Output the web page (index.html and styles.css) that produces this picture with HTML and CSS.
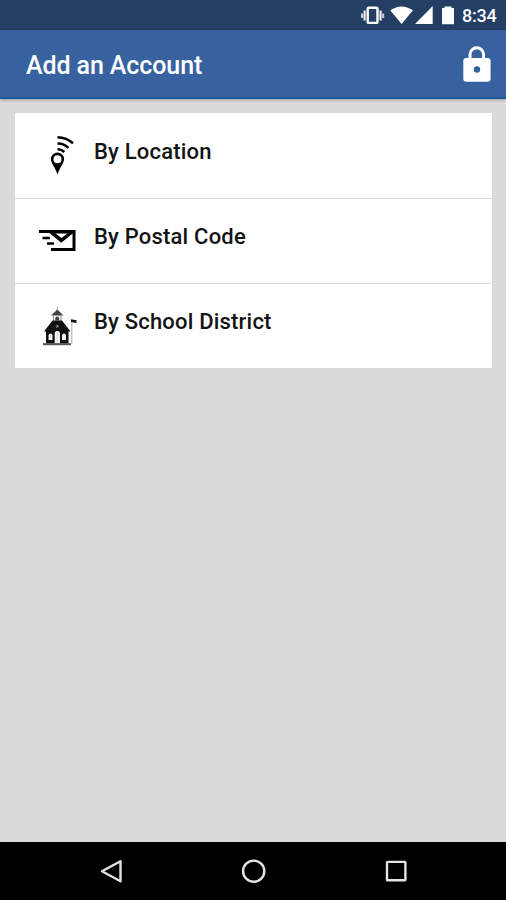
FILE: index.html
```html
<!DOCTYPE html>
<html lang="en">
<head>
  <meta charset="UTF-8">
  <meta name="viewport" content="width=device-width, initial-scale=1.0">
  <title>Add an Account</title>
  <link rel="stylesheet" href="styles.css">
</head>
<body>
  <div class="status-bar">
    <svg class="status-icons" width="96" height="30" viewBox="0 0 96 30">
      <!-- vibrate -->
      <rect x="7.700" y="7.700" width="9.800" height="15.200" rx="1" fill="none" stroke="#fff" stroke-width="2.400"/>
      <path d="M4.600 10.500v10M20.600 10.500v10" stroke="#e8ecf2" stroke-width="2.200"/>
      <path d="M2 13.500v4.500M23.200 13.500v4.500" stroke="#c4cdd9" stroke-width="2"/>
      <!-- wifi -->
      <path d="M30.200 10.300Q41.500 2.500 53 10.300L41.600 24Z" fill="#fff"/>
      <!-- signal -->
      <path d="M72.700 6v18H55Z" fill="#fff"/>
      <!-- battery -->
      <path d="M84.500 6.500h7v1.500h2.500v16.300H82V8h2.500Z" fill="#fff"/>
    </svg>
    <span class="clock">8:34</span>
  </div>

  <header class="app-bar">
    <h1>Add an Account</h1>
    <svg class="lock" width="30" height="38" viewBox="0 0 30 38">
      <path d="M8 15V9.500a6.800 6.800 0 0 1 13.600 0V15" fill="none" stroke="#fff" stroke-width="3"/>
      <rect x="1.300" y="13" width="27.300" height="23.700" rx="3" fill="#fff"/>
      <circle cx="15" cy="24.500" r="3.200" fill="#37629f"/>
    </svg>
  </header>

  <main>
    <ul class="options">
      <li>
        <svg width="60" height="60" viewBox="0 0 60 60">
          <path fill-rule="evenodd" d="M27.500 27.500a6.600 6.600 0 0 1 6.600 6.500c0 4-4 8-6.600 15.500C25 42 20.900 38 20.900 34a6.600 6.600 0 0 1 6.600-6.500ZM27.500 30.200a4 4 0 1 0 0 8a4 4 0 1 0 0-8Z"/>
          <path d="M27.500 24.300Q31.500 24.300 34.300 27M27.500 18.500Q34 18.300 38.300 22.800M27.500 12.300Q36.500 12.500 43 18.300" fill="none" stroke="#000" stroke-width="2.500"/>
        </svg>
        <span>By Location</span>
      </li>
      <li>
        <svg width="60" height="60" viewBox="0 0 60 60">
          <path d="M9 21.500H44V39.600H21" fill="none" stroke="#000" stroke-width="3"/>
          <path d="M17 21 31.300 32.700 44.500 22V21Z"/>
          <path d="M25.500 23.500H37.500L31.500 28Z" fill="#fff"/>
          <path d="M12.500 28h7.500M17 33.500h7" stroke="#000" stroke-width="2.600"/>
        </svg>
        <span>By Postal Code</span>
      </li>
      <li>
        <svg width="60" height="60" viewBox="0 0 60 60">
          <path d="M27.300 11.500v4" stroke="#aaa" stroke-width="1"/>
          <path d="M27.300 14.500 33.500 20.500H21Z" fill="#444"/>
          <path d="M23.500 21v5M31 21v5" stroke="#888" stroke-width="1"/>
          <path d="M25.200 25.500v-2a2 2 0 0 1 4 0v2Z" fill="#444"/>
          <path d="M22.500 25.500H32L40.500 36.500H38.500V48.500H16V36.500H14Z" fill="#111"/>
          <circle cx="27.300" cy="31.300" r="1.500" fill="#777"/>
          <path d="M18.500 45v-4.500a2 2 0 0 1 4 0V45ZM32 45v-4.500a2 2 0 0 1 4 0V45Z" fill="#eee"/>
          <path d="M24.700 48.500V38.500a2.600 2.600 0 0 1 5.200 0V48.500Z" fill="#fff"/>
          <path d="M27.300 37v11.500" stroke="#aaa" stroke-width=".6"/>
          <path d="M13 49.200H41" stroke="#555" stroke-width="2"/>
          <path d="M41.800 25v24" stroke="#aaa" stroke-width="1"/>
          <path d="M41 24.300 46.500 25.300V28L41 27Z" fill="#111"/>
        </svg>
        <span>By School District</span>
      </li>
    </ul>
  </main>

  <nav class="nav-bar">
    <svg width="28" height="28" viewBox="0 0 28 28">
      <path d="M4 14.200 22.500 4.200V24.200Z"/>
    </svg>
    <svg width="28" height="28" viewBox="0 0 28 28">
      <circle cx="13.700" cy="14.200" r="10.600"/>
    </svg>
    <svg width="28" height="28" viewBox="0 0 28 28">
      <rect x="5" y="4.900" width="18.400" height="18.400" rx=".5"/>
    </svg>
  </nav>
</body>
</html>
```
FILE: styles.css
```css
* {
  box-sizing: border-box;
}

body {
  margin: 0;
  height: 100vh;
  display: flex;
  flex-direction: column;
  background: #dadada;
  font-family: Roboto, "Liberation Sans", sans-serif;
  overflow: hidden;
}

.status-bar {
  height: 30px;
  display: flex;
  justify-content: flex-end;
  align-items: center;
  padding-right: 9px;
  background: #243f63;
  color: #fff;
}

.status-icons {
  margin-right: 6px;
}

.clock {
  width: 35px;
  font-size: 18px;
  font-weight: 500;
  line-height: 30px;
  padding-top: 2px;
  letter-spacing: -0.2px;
  white-space: nowrap;
}

.app-bar {
  height: 69px;
  display: flex;
  justify-content: space-between;
  align-items: center;
  padding: 0 14px 0 26px;
  background: #37629f;
  border-bottom: 2px solid #1c5797;
  box-shadow: 0 1px 3px rgba(0, 0, 0, 0.3);
  color: #fff;
}

.app-bar h1 {
  margin: 0;
  padding-top: 5px;
  font-size: 25px;
  font-weight: 500;
  line-height: 30px;
  letter-spacing: -0.1px;
}

main {
  flex: 1;
  padding: 14px 14px 0 15px;
}

.options {
  margin: 0;
  padding: 0;
  list-style: none;
  background: #fff;
}

.options li {
  height: 85px;
  display: flex;
  align-items: flex-start;
  padding: 12px 0 0 15px;
}

.options li + li {
  padding-top: 11px;
  border-top: 1px solid #dcdcdc;
}

.options span {
  padding: 13px 0 0 4px;
  font-size: 22px;
  font-weight: 500;
  line-height: 28px;
  letter-spacing: 0.2px;
  color: #141414;
}

/* system navigation */
.nav-bar {
  height: 58px;
  display: flex;
  justify-content: space-between;
  padding: 15px 96px 0 98px;
  background: #000;
}

.nav-bar svg {
  fill: none;
  stroke: #e4e4e4;
  stroke-width: 2.4;
  stroke-linejoin: round;
}
```
